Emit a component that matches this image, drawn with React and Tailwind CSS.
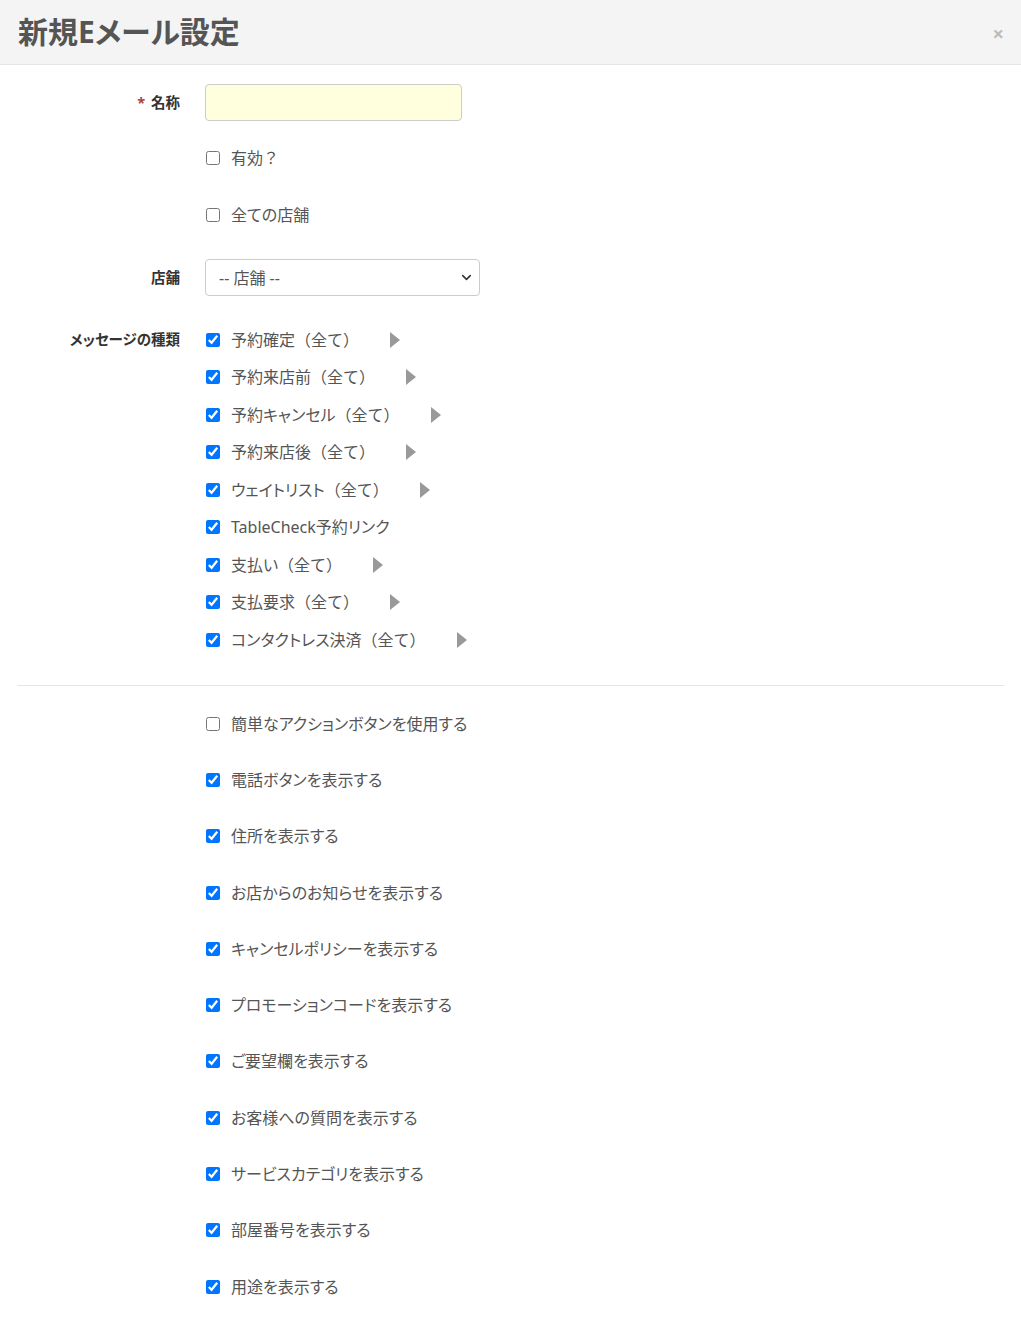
import { ChevronDown } from 'lucide-react';

const font = {
  fontFamily: '"Noto Sans", "Noto Sans CJK JP", sans-serif',
  fontFeatureSettings: '"palt"',
};

// 括弧は全角幅のまま表示する
const ALL = '（全て）';

const messageTypes = [
  { label: '予約確定', suffix: ALL },
  { label: '予約来店前', suffix: ALL },
  { label: '予約キャンセル', suffix: ALL },
  { label: '予約来店後', suffix: ALL },
  { label: 'ウェイトリスト', suffix: ALL },
  { label: 'TableCheck予約リンク' },
  { label: '支払い', suffix: ALL },
  { label: '支払要求', suffix: ALL },
  { label: 'コンタクトレス決済', suffix: ALL },
];

const displayOptions = [
  { label: '簡単なアクションボタンを使用する', checked: false },
  { label: '電話ボタンを表示する', checked: true },
  { label: '住所を表示する', checked: true },
  { label: 'お店からのお知らせを表示する', checked: true },
  { label: 'キャンセルポリシーを表示する', checked: true },
  { label: 'プロモーションコードを表示する', checked: true },
  { label: 'ご要望欄を表示する', checked: true },
  { label: 'お客様への質問を表示する', checked: true },
  { label: 'サービスカテゴリを表示する', checked: true },
  { label: '部屋番号を表示する', checked: true },
  { label: '用途を表示する', checked: true },
];

function Check({ label, suffix, checked }) {
  return (
    <label className="flex items-center text-[16px] text-[#555]">
      <input
        type="checkbox"
        defaultChecked={checked}
        className="ml-px h-[14px] w-[14px] accent-[#0075ff]"
      />
      <span className="ml-[11px] leading-none">
        {label}
        {suffix && <span className="[font-feature-settings:normal]">{suffix}</span>}
      </span>
    </label>
  );
}

function Arrow() {
  return (
    <svg width="10" height="16" viewBox="0 0 10 16" className="ml-[31px]">
      <path d="M0 0 L10 8 L0 16 Z" fill="#999" />
    </svg>
  );
}

function Row({ label, required, className = '', children }) {
  return (
    <div className={`flex ${className}`}>
      <div className="flex w-[180px] shrink-0 items-center justify-end text-[14.5px] font-bold text-[#333]">
        {required && <span className="mr-[6px] text-[#a94442]">*</span>}
        {label}
      </div>
      <div className="ml-[25px] flex-1">{children}</div>
    </div>
  );
}

export default function App() {
  return (
    <div className="min-h-[1325px] bg-white" style={font}>
      {/* ヘッダー */}
      <div className="flex h-[65px] items-center justify-between border-b border-[#e5e5e5] bg-[#f4f4f4] pl-[18px] pr-[17px]">
        <h1 className="text-[30px] font-bold leading-none text-[#555]">新規Eメール設定</h1>
        <span className="mt-[4px] text-[20px] font-bold leading-none text-[#bbb]">×</span>
      </div>

      <div className="pt-[19px]">
        <Row label="名称" required className="h-[37px]">
          <input
            type="text"
            className="h-[37px] w-[257px] rounded-[4px] border border-[#ccc] bg-[#ffffdd]"
          />
        </Row>

        <Row label="" className="mt-[25px] h-[24px]">
          <div className="flex h-full items-center">
            <Check label="有効" suffix="？" checked={false} />
          </div>
        </Row>

        <Row label="" className="mt-[33px] h-[24px]">
          <div className="flex h-full items-center">
            <Check label="全ての店舗" checked={false} />
          </div>
        </Row>

        <Row label="店舗" className="mt-[32px] h-[37px]">
          <div className="relative h-[37px] w-[275px]">
            <select className="h-full w-full appearance-none rounded-[4px] border border-[#ccc] bg-white pl-[13px] text-[16px] text-[#555]">
              <option>-- 店舗 --</option>
            </select>
            <ChevronDown
              size={15}
              strokeWidth={2.5}
              className="pointer-events-none absolute right-[6px] top-[11px] text-[#333]"
            />
          </div>
        </Row>

        <div className="mt-[25px] flex">
          <div className="flex h-[37.5px] w-[180px] shrink-0 items-center justify-end text-[14.5px] font-bold text-[#333]">
            メッセージの種類
          </div>
          <div className="ml-[25px] flex-1">
            {messageTypes.map((m) => (
              <div key={m.label} className="flex h-[37.5px] items-center">
                <Check label={m.label} suffix={m.suffix} checked />
                {m.suffix && <Arrow />}
              </div>
            ))}
          </div>
        </div>

        <div className="mx-[17px] mt-[26px] border-t border-[#e5e5e5]" />

        <div className="mt-[10px] pl-[205px]">
          {displayOptions.map((o) => (
            <div key={o.label} className="flex h-[56.3px] items-center">
              <Check label={o.label} checked={o.checked} />
            </div>
          ))}
        </div>
      </div>
    </div>
  );
}
